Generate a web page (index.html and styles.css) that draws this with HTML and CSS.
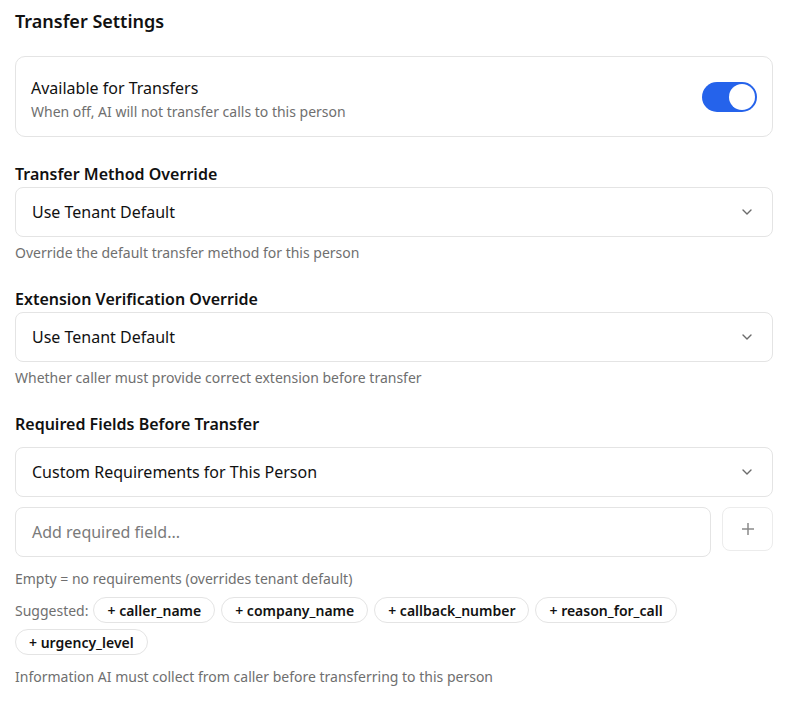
FILE: index.html
```html
<!DOCTYPE html>
<html>
<head>
<meta charset="utf-8">
<link rel="stylesheet" href="styles.css">
</head>
<body>
<div class="panel">
  <h2 class="title">Transfer Settings</h2>

  <div class="card">
    <div class="card-text">
      <div class="card-title">Available for Transfers</div>
      <div class="card-sub">When off, AI will not transfer calls to this person</div>
    </div>
    <div class="toggle"><div class="knob"></div></div>
  </div>

  <div class="field field-first">
    <div class="label">Transfer Method Override</div>
    <div class="select"><span>Use Tenant Default</span>
      <svg class="chev" width="16" height="16" viewBox="0 0 16 16"><path d="M4 6l4 4 4-4" fill="none" stroke="#6b6b6b" stroke-width="1.4" stroke-linecap="round" stroke-linejoin="round"/></svg>
    </div>
    <div class="help">Override the default transfer method for this person</div>
  </div>

  <div class="field">
    <div class="label">Extension Verification Override</div>
    <div class="select"><span>Use Tenant Default</span>
      <svg class="chev" width="16" height="16" viewBox="0 0 16 16"><path d="M4 6l4 4 4-4" fill="none" stroke="#6b6b6b" stroke-width="1.4" stroke-linecap="round" stroke-linejoin="round"/></svg>
    </div>
    <div class="help">Whether caller must provide correct extension before transfer</div>
  </div>

  <div class="field">
    <div class="label label-gap">Required Fields Before Transfer</div>
    <div class="select"><span>Custom Requirements for This Person</span>
      <svg class="chev" width="16" height="16" viewBox="0 0 16 16"><path d="M4 6l4 4 4-4" fill="none" stroke="#6b6b6b" stroke-width="1.4" stroke-linecap="round" stroke-linejoin="round"/></svg>
    </div>
    <div class="add-row">
      <div class="input">Add required field...</div>
      <div class="add-btn">
        <svg width="16" height="16" viewBox="0 0 16 16"><path d="M8 2v12M2 8h12" stroke="#8a8a8a" stroke-width="1.5"/></svg>
      </div>
    </div>
    <div class="help help-mid">Empty = no requirements (overrides tenant default)</div>
    <div class="chips">
      <span class="sugg">Suggested:</span>
      <span class="chip">+ caller_name</span>
      <span class="chip">+ company_name</span>
      <span class="chip">+ callback_number</span>
      <span class="chip">+ reason_for_call</span>
      <span class="chip">+ urgency_level</span>
    </div>
    <div class="help help-last">Information AI must collect from caller before transferring to this person</div>
  </div>
</div>
</body>
</html>
```
FILE: styles.css
```css
* { box-sizing: border-box; }
body {
  margin: 0;
  background: #ffffff;
  font-family: "Noto Sans", "Open Sans", sans-serif;
  color: #111111;
}
.panel {
  width: 758px;
  margin-left: 15px;
  padding-top: 7px;
}
.title {
  margin: 0;
  font-size: 18px;
  font-weight: 600;
  line-height: 28px;
}
.card {
  margin-top: 21px;
  height: 81px;
  border: 1px solid #e4e4e4;
  border-radius: 10px;
  display: flex;
  align-items: center;
  justify-content: space-between;
  padding: 0 15px;
}
.card-text { margin-top: 6px; }
.card-title { font-size: 16px; line-height: 22px; }
.card-sub { font-size: 14px; line-height: 20px; color: #6f6f6f; margin-top: 3px; }
.toggle {
  width: 55px;
  height: 30px;
  border-radius: 15px;
  background: #2563eb;
  position: relative;
}
.knob {
  position: absolute;
  right: 2px;
  top: 2px;
  width: 26px;
  height: 26px;
  border-radius: 50%;
  background: #fff;
}
.field { margin-top: 24px; }
.field-first { margin-top: 25px; }
.label {
  font-size: 16px;
  font-weight: 600;
  line-height: 24px;
  margin-bottom: 1px;
}
.label-gap { margin-bottom: 11px; }
.select {
  height: 50px;
  border: 1px solid #e4e4e4;
  border-radius: 8px;
  display: flex;
  align-items: center;
  justify-content: space-between;
  padding: 0 17px 0 16px;
  font-size: 16px;
}
.help {
  font-size: 14px;
  line-height: 20px;
  color: #6f6f6f;
  margin-top: 6px;
}
.add-row {
  display: flex;
  gap: 11px;
  margin-top: 10px;
  align-items: flex-start;
}
.input {
  flex: 1;
  height: 50px;
  border: 1px solid #e4e4e4;
  border-radius: 8px;
  display: flex;
  align-items: center;
  padding: 0 16px;
  font-size: 16px;
  color: #7a7a7a;
}
.add-btn {
  width: 51px;
  height: 44px;
  border: 1px solid #ececec;
  border-radius: 8px;
  display: flex;
  align-items: center;
  justify-content: center;
}
.help-mid { margin-top: 12px; }
.chips {
  display: flex;
  flex-wrap: wrap;
  gap: 6px;
  align-items: center;
  margin-top: 8px;
}
.sugg { font-size: 14px; color: #6f6f6f; margin-right: -1px; }
.chip {
  height: 26px;
  border: 1px solid #e4e4e4;
  border-radius: 13px;
  padding: 0 13px;
  display: flex;
  align-items: center;
  font-size: 14px;
  font-weight: 600;
}
.help-last { margin-top: 12px; }
```
